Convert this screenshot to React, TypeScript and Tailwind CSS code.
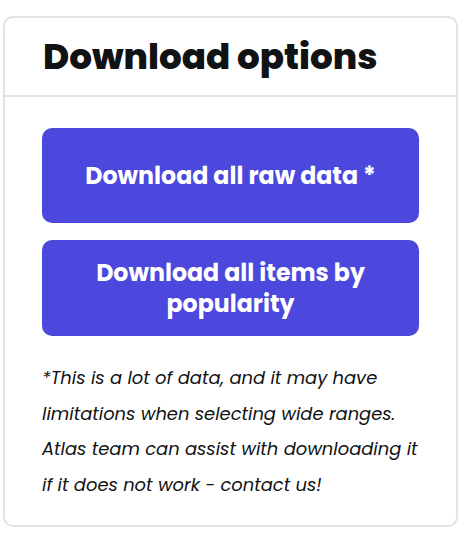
export default function App() {
  return (
    <div className="pt-4 pl-[3px]" style={{ fontFamily: 'Poppins, Inter, "Noto Sans", sans-serif' }}>
      <div className="w-[455px] rounded-[10px] border-2 border-[#e2e2e2] bg-white">
        <div className="border-b-2 border-[#e2e2e2] h-[79px] flex items-center pl-[38px]">
          <h2 className="text-[35.7px] font-extrabold text-[#111214] leading-none">Download options</h2>
        </div>
        <div className="px-[37px] pt-[31px] pb-[23px]">
          <div className="flex flex-col gap-[17px]">
            <button className="h-[95px] w-full rounded-[10px] bg-[#4c48dd] text-white text-[23.7px] font-bold leading-[31px] px-10">
              Download all raw data *
            </button>
            <button className="h-[96px] w-full rounded-[10px] bg-[#4c48dd] text-white text-[23.7px] font-bold leading-[31px] px-10">
              Download all items by popularity
            </button>
          </div>
          <p className="mt-[24px] text-[17.9px] italic leading-[35.5px] text-[#111214]">
            *This is a lot of data, and it may have limitations when selecting wide ranges. Atlas team can assist with downloading it if it does not work - contact us!
          </p>
        </div>
      </div>
    </div>
  );
}
